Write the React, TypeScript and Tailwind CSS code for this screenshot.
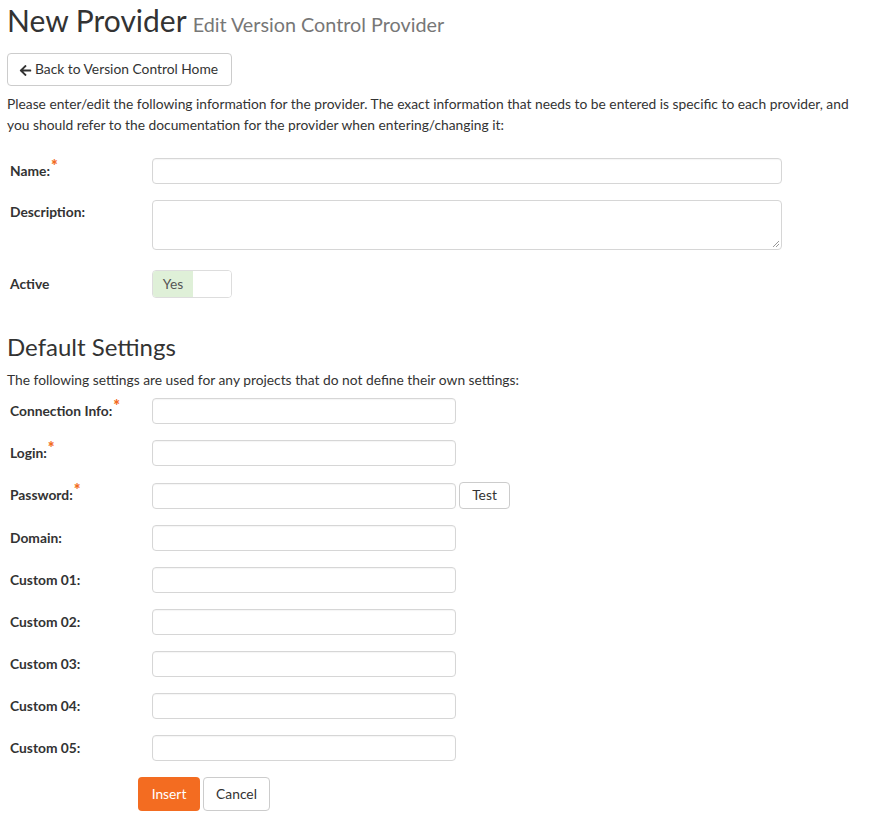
import React from "react";

const Star = () => <span className="text-[#f26b21] text-[16px] font-black relative -top-[4px] ml-[1px] leading-none">*</span>;

function Row({ label, req, children, top = false, className = "" }: { label: string; req?: boolean; children: React.ReactNode; top?: boolean; className?: string }) {
  return (
    <div className={`flex ${top ? "items-start" : "items-center"} ${className}`}>
      <div className={`w-[145px] pl-[3px] font-bold text-[13.8px] text-[#333] ${top ? "pt-[2px]" : ""}`}>
        {label}
        {req && <Star />}
      </div>
      {children}
    </div>
  );
}

const inputCls = "h-[26px] border border-[#d6d6d6] rounded-[4px] bg-white shadow-[inset_0_1px_1px_rgba(0,0,0,0.04)]";

export default function App() {
  const shortRows: { label: string; req?: boolean; test?: boolean }[] = [
    { label: "Connection Info:", req: true },
    { label: "Login:", req: true },
    { label: "Password:", req: true, test: true },
    { label: "Domain:" },
    { label: "Custom 01:" },
    { label: "Custom 02:" },
    { label: "Custom 03:" },
    { label: "Custom 04:" },
    { label: "Custom 05:" },
  ];
  return (
    <div className="px-[7px] text-[13.8px] text-[#333] bg-white min-h-[825px]" style={{ fontFamily: "Lato, 'Open Sans', sans-serif" }}>
      <h1 className="h-[40px] leading-[40px] flex items-baseline">
        <span className="text-[30px] text-[#333] font-normal">New Provider</span>
        <span className="text-[19.8px] text-[#777] ml-[6px]">Edit Version Control Provider</span>
      </h1>
      <button className="mt-[13px] h-[33px] w-[225px] pl-[11px] border border-[#ccc] rounded-[4px] bg-white text-[13.8px] text-[#333] flex items-center gap-[3px]">
        <svg width="13" height="13" viewBox="0 0 448 512" className="mt-[1px]"><path fill="#333" d="M257.5 445.1l-22.2 22.2c-9.4 9.4-24.6 9.4-33.9 0L7 273c-9.4-9.4-9.4-24.6 0-33.9L201.4 44.7c9.4-9.4 24.6-9.4 33.9 0l22.2 22.2c9.5 9.5 9.3 25-.4 34.3L136.6 216H424c13.3 0 24 10.7 24 24v32c0 13.3-10.7 24-24 24H136.6l120.5 114.8c9.8 9.3 10 24.8.4 34.3z" /></svg>
        Back to Version Control Home
      </button>
      <p className="mt-[7px] leading-[21px] text-[13.8px]">
        Please enter/edit the following information for the provider. The exact information that needs to be entered is specific to each provider, and you should refer to the documentation for the provider when entering/changing it:
      </p>
      <div className="mt-[23px]">
        <Row label="Name:" req>
          <div className={`${inputCls} w-[630px]`} />
        </Row>
        <Row label="Description:" top className="mt-[16px]">
          <div className={`w-[630px] h-[50px] border border-[#d6d6d6] rounded-[4px] bg-white relative`}>
            <svg className="absolute right-[1px] bottom-[1px]" width="8" height="8" viewBox="0 0 8 8"><path d="M7 1L1 7M7 4L4 7" stroke="#999" strokeWidth="1" /></svg>
          </div>
        </Row>
        <Row label="Active" className="mt-[20px]">
          <div className="w-[80px] h-[28px] border border-[#ddd] rounded-[4px] flex overflow-hidden">
            <div className="w-[40px] bg-[#dff0d8] text-[#555] flex items-center justify-center text-[13.8px]">Yes</div>
            <div className="flex-1 bg-white" />
          </div>
        </Row>
      </div>
      <h2 className="mt-[34px] text-[24px] leading-[30px] font-normal text-[#333]">Default Settings</h2>
      <p className="mt-[8px] leading-[20px]">The following settings are used for any projects that do not define their own settings:</p>
      <div className="mt-[8px] flex flex-col gap-[16px]">
        {shortRows.map((r) => (
          <Row key={r.label} label={r.label} req={r.req}>
            <div className={`${inputCls} w-[304px]`} />
            {r.test && (
              <button className="ml-[3px] h-[27px] w-[51px] border border-[#ccc] rounded-[4px] bg-white text-[13.8px] text-[#333]">Test</button>
            )}
          </Row>
        ))}
      </div>
      <div className="mt-[16px] pl-[131px] flex gap-[3px]">
        <button className="h-[34px] w-[62px] rounded-[4px] bg-[#f36c21] text-white text-[13.8px]">Insert</button>
        <button className="h-[34px] w-[67px] rounded-[4px] border border-[#ccc] bg-white text-[#333] text-[13.8px]">Cancel</button>
      </div>
    </div>
  );
}
